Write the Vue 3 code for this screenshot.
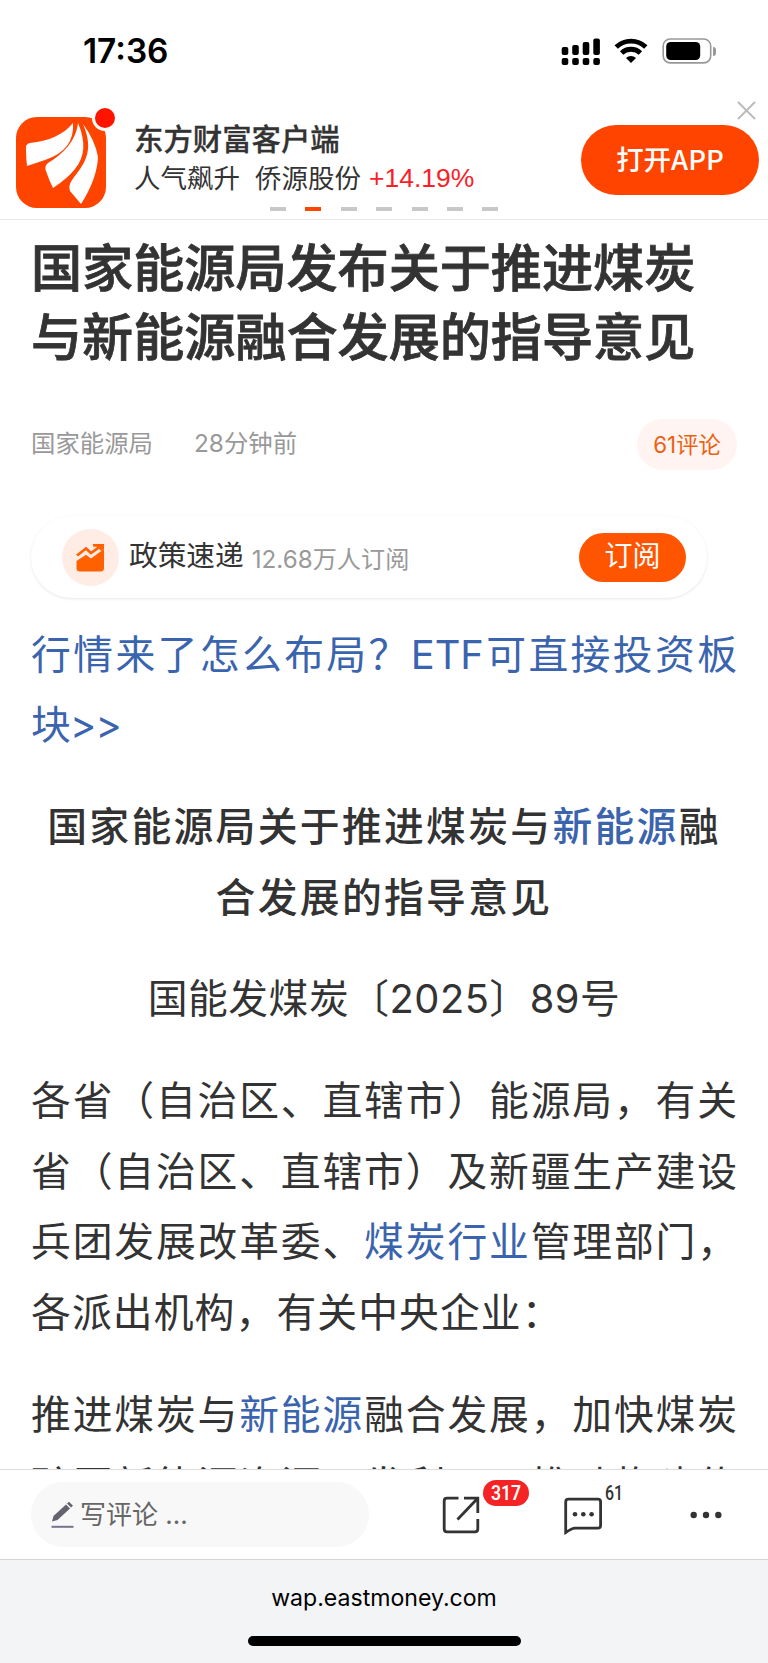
<template>
  <div class="page">
    <header class="status-bar">
      <span class="time">17:36</span>
      <svg class="status-icons" width="152" height="32" viewBox="0 0 152 32">
        <rect
          v-for="bar in signalBars"
          :key="`${bar.x}-${bar.y}`"
          :x="bar.x"
          :y="bar.y"
          width="6.6"
          :height="bar.height"
          rx="2"
        />
        <g fill="none" stroke="#000" stroke-width="4.8">
          <path d="M56.2 14a21.4 21.4 0 0 1 29.6 0" />
          <path d="M61.6 20a13.6 13.6 0 0 1 18.8 0" />
        </g>
        <path d="M71 30l-5-5.1a7.2 7.2 0 0 1 10 0z" />
        <rect x="103.2" y="6" width="47.5" height="23.9" rx="7" fill="none" stroke="#999" stroke-width="1.6" />
        <rect x="106.2" y="9" width="34" height="18" rx="4.5" />
      </svg>
      <i class="battery-cap"></i>
    </header>

    <section class="app-banner">
      <div class="logo">
        <svg width="90" height="91" viewBox="0 0 90 91">
          <path fill="#fff" d="M57 6C47 18 33 24 14 26Q9 27 10 33Q10 41 11 49L29 43Q59 33 57 6Z" />
          <path fill="#fff" d="M62 6C60 24 47 37 32 46Q28 49 30 54Q33 63 37 71Q52 61 59 52Q74 34 62 6Z" />
          <path fill="#fff" d="M67 7Q79 23 82 40Q81 62 65 87L54 74Q52 69 56 63C68 47 79 35 67 7Z" />
        </svg>
        <i class="logo-dot"></i>
      </div>
      <div class="banner-text">
        <div class="banner-title">东方财富客户端</div>
        <div class="banner-sub">
          <span>人气飙升</span>
          <span class="stock">侨源股份</span>
          <span class="rise">+14.19%</span>
        </div>
      </div>
      <button class="open-app">打开APP</button>
      <svg class="close" width="19" height="19" viewBox="0 0 19 19">
        <path d="M1 1L18 18M18 1L1 18" stroke="#bcbcbc" stroke-width="2" />
      </svg>
      <div class="pager">
        <i v-for="n in 7" :key="n" :class="{ active: n === 2 }"></i>
      </div>
    </section>

    <main class="article">
      <h1>国家能源局发布关于推进煤炭<br />与新能源融合发展的指导意见</h1>

      <div class="meta">
        <span>国家能源局</span>
        <span class="ago">28分钟前</span>
        <span class="comment-count">61评论</span>
      </div>

      <div class="subscribe">
        <svg class="topic-icon" width="57" height="57" viewBox="0 0 57 57">
          <circle cx="28.5" cy="28.5" r="28.5" fill="#ffece4" />
          <path d="M15 26.5L24 19.5L29 24L39 16.8" fill="none" stroke="#ff6000" stroke-width="2.7" />
          <path d="M31 15H42V20L39 22L36 18L31 17.5Z" fill="#ff6000" />
          <path d="M14.5 32L24 25.8L29 29.5L42 20V39Q42 42.5 38.5 42.5H18Q14.5 42.5 14.5 39Z" fill="#ff6000" />
        </svg>
        <span class="topic">政策速递</span>
        <span class="readers">12.68万人订阅</span>
        <button class="subscribe-btn">订阅</button>
      </div>

      <div class="content">
        <p v-for="(para, i) in paragraphs" :key="i" :class="para.type">
          <span
            v-for="(line, j) in para.lines"
            :key="j"
            class="line"
            :class="{ full: line.full }"
          ><template v-for="(part, k) in line.parts" :key="k"><a v-if="part.link">{{ part.text }}</a><template v-else>{{ part.text }}</template></template></span>
        </p>
      </div>
    </main>

    <nav class="toolbar">
      <div class="comment-input">
        <svg width="23" height="28" viewBox="0 0 23 28">
          <path d="M1 20.5L2.5 15L15 3.5L19 7.5L6.5 19Z" fill="#666370" />
          <path d="M16 2.5L18 .8L22 4.8L20 6.6Z" fill="#666370" />
          <path d="M.5 25.8H22.5" stroke="#77738a" stroke-width="2" />
        </svg>
        <span>写评论 ...</span>
      </div>
      <div class="tool share">
        <svg width="38" height="38" viewBox="0 0 38 38" fill="none" stroke="#333" stroke-width="2.8">
          <path d="M16.5 2.2H5Q2.2 2.2 2.2 5V33Q2.2 35.8 5 35.8H33Q35.8 35.8 35.8 33V23" />
          <path d="M22 2.2H35.8V17M35 3L15.5 23.5" />
        </svg>
        <span class="badge"><b>317</b></span>
      </div>
      <div class="tool chat">
        <svg width="38" height="38" viewBox="0 0 38 38" fill="none" stroke="#333" stroke-width="2.8">
          <path d="M1.7 35.5V5Q1.7 2.2 4.5 2.2H33.8Q36.6 2.2 36.6 5V28.5Q36.6 31.2 33.8 31.2H11Q8 31.4 1.7 35.5Z" />
          <g fill="#333" stroke="none">
            <circle cx="11" cy="17.2" r="2.3" />
            <circle cx="19.3" cy="17.2" r="2.3" />
            <circle cx="27.6" cy="17.2" r="2.3" />
          </g>
        </svg>
        <span class="chat-count">61</span>
      </div>
      <svg class="more" width="32" height="8" viewBox="0 0 32 8" fill="#333">
        <circle cx="3.7" cy="4" r="3.2" />
        <circle cx="16" cy="4" r="3.2" />
        <circle cx="28.3" cy="4" r="3.2" />
      </svg>
    </nav>

    <footer class="browser-bar">
      <span>wap.eastmoney.com</span>
      <i class="home-indicator"></i>
    </footer>
  </div>
</template>

<script setup>
const signalBars = [
  { x: 1.7, y: 14, height: 8 },
  { x: 12.2, y: 12, height: 10 },
  { x: 22.7, y: 9, height: 13 },
  { x: 33.3, y: 5.5, height: 16.5 },
  { x: 1.7, y: 25, height: 7 },
  { x: 12.2, y: 25, height: 7 },
  { x: 22.7, y: 25, height: 7 },
  { x: 33.3, y: 25, height: 7 },
]

// [text] marks a keyword link
const parse = (raw, full = false) => ({
  full,
  parts: raw
    .split(/(\[[^\]]+\])/)
    .filter(Boolean)
    .map((s) => (s[0] === '[' ? { text: s.slice(1, -1), link: true } : { text: s })),
})

const paragraphs = [
  {
    type: 'promo',
    lines: [parse('[行情来了怎么布局？ETF可直接投资板]', true), parse('[块>>]')],
  },
  {
    type: 'heading',
    lines: [parse('国家能源局关于推进煤炭与[新能源]融'), parse('合发展的指导意见')],
  },
  { type: 'doc-no', lines: [parse('国能发煤炭〔2025〕89号')] },
  {
    type: 'text',
    lines: [
      parse('各省（自治区、直辖市）能源局，有关', true),
      parse('省（自治区、直辖市）及新疆生产建设', true),
      parse('兵团发展改革委、[煤炭行业]管理部门，', true),
      parse('各派出机构，有关中央企业：'),
    ],
  },
  {
    type: 'text',
    lines: [
      parse('推进煤炭与[新能源]融合发展，加快煤炭', true),
      parse('矿区新能源资源开发利用，推动构建传', true),
    ],
  },
]
</script>

<style>
body {
  background: #fff;
}
</style>

<style scoped>
.page {
  display: flex;
  flex-direction: column;
  width: 768px;
  height: 1663px;
  overflow: hidden;
  background: #fff;
  color: #333;
  font-family: Inter, 'Noto Sans CJK SC', sans-serif;
  text-spacing-trim: space-all;
}

button {
  border: 0;
  padding: 0;
  color: #fff;
  font-family: inherit;
}

.status-bar {
  display: flex;
  align-items: flex-start;
  flex: none;
  box-sizing: border-box;
  height: 100px;
  padding: 32px 0 0 83px;
}

.status-icons {
  margin-top: 1px;
}

.time {
  width: 477px;
  font: 600 33.4px/38px Inter, sans-serif;
  color: #000;
}

.battery-cap {
  width: 3px;
  height: 9px;
  margin: 15px 0 0 1px;
  border-radius: 0 4px 4px 0;
  background: #999;
}

.app-banner {
  position: relative;
  display: flex;
  flex: none;
  box-sizing: border-box;
  height: 120px;
  padding: 17px 9px 0 16px;
  border-bottom: 1px solid #e8e8e8;
}

.logo {
  position: relative;
  width: 90px;
  height: 91px;
  border-radius: 21px;
  background: #ff4400;
}

.logo-dot {
  position: absolute;
  top: -12px;
  right: -12px;
  width: 20px;
  height: 20px;
  border: 3px solid #fff;
  border-radius: 50%;
  background: #ff1400;
}

.banner-text {
  flex: 1;
  margin-left: 28px;
}

.banner-title {
  margin-top: 4px;
  font-size: 29.4px;
  font-weight: 500;
  line-height: 38px;
  -webkit-text-stroke: 0.3px #333;
}

.banner-sub {
  display: flex;
  font-size: 26.5px;
  line-height: 38px;
  white-space: nowrap;
}

.stock {
  margin-left: 15px;
}

.rise {
  margin-left: 8px;
  font-family: 'Liberation Sans', sans-serif;
  font-size: 26.5px;
  color: #fa1e28;
}

.open-app {
  width: 178px;
  height: 70px;
  margin-top: 8px;
  border-radius: 35px;
  background: #ff4400;
  font-family: 'Noto Sans CJK SC', sans-serif;
  font-size: 27.5px;
  font-weight: 500;
  padding-bottom: 5px;
}

.close {
  position: absolute;
  top: 1px;
  right: 12px;
}

.pager {
  position: absolute;
  top: 107px;
  left: 270px;
  display: flex;
  gap: 19.4px;
}

.pager i {
  width: 16px;
  height: 4px;
  background: #c8c8c8;
}

.pager i.active {
  background: #ff4400;
}

.article {
  flex: 1;
  min-height: 0;
  padding: 0 31px;
  overflow: hidden;
}

h1 {
  margin: 14px 0 0;
  font-size: 51.1px;
  font-weight: 500;
  line-height: 69px;
  white-space: nowrap;
  -webkit-text-stroke: 0.8px #333;
}

.meta {
  display: flex;
  align-items: center;
  height: 51px;
  margin-top: 47px;
  font-size: 24.4px;
  line-height: 34px;
  color: #999;
}

.meta span {
  margin-top: -3px;
}

.meta .ago {
  margin-left: 41px;
}

.meta .comment-count {
  width: 100px;
  height: 51px;
  margin: 0 0 0 auto;
  border-radius: 26px;
  background: #fff4f1;
  color: #eb6110;
  font-size: 22.3px;
  line-height: 52px;
  text-align: center;
}

.subscribe {
  display: flex;
  align-items: center;
  box-sizing: border-box;
  width: 676px;
  height: 82px;
  margin-top: 46px;
  padding: 0 21px 0 31px;
  border-radius: 41px;
  box-shadow: 0 1px 3px rgba(0, 0, 0, 0.1);
}

.topic {
  margin: -7px 0 0 10px;
  font-size: 28.7px;
}

.readers {
  margin: 1px 0 0 8px;
  font-size: 24.2px;
  color: #999;
}

.subscribe-btn {
  width: 107px;
  height: 49px;
  margin-left: auto;
  padding-bottom: 7px;
  border-radius: 25px;
  background: #ff5500;
  font-size: 28px;
}

.content {
  margin-top: 21.5px;
  font-size: 39.8px;
  line-height: 70.8px;
}

.content p {
  margin: 0 0 30.8px;
}

.line {
  display: block;
  letter-spacing: 1.1px;
  white-space: nowrap;
}

.line.full {
  letter-spacing: 0;
  white-space: normal;
  text-align: justify;
  text-align-last: justify;
}

.content a {
  color: #3a64ae;
}

.promo .line:not(.full) {
  letter-spacing: -0.8px;
}

.content .heading {
  font-weight: 500;
  text-align: center;
}

.heading .line {
  letter-spacing: 2.3px;
}

.content .doc-no {
  text-align: center;
}

.doc-no .line {
  letter-spacing: 0.5px;
}

.toolbar {
  position: relative;
  display: flex;
  align-items: center;
  flex: none;
  box-sizing: border-box;
  height: 91px;
  padding: 0 34px 0 31px;
  border-top: 1px solid #dcdcdc;
  border-bottom: 1px solid #d4d4d6;
}

.comment-input {
  display: flex;
  align-items: center;
  box-sizing: border-box;
  width: 338px;
  height: 65px;
  padding-left: 20px;
  border-radius: 33px;
  background: #f8f8f8;
  color: #666;
  font-size: 26px;
  white-space: pre;
}

.comment-input span {
  margin: -4px 0 0 6px;
}

.tool {
  position: relative;
  height: 38px;
}

.share {
  margin-left: 73px;
}

.chat {
  margin: 3px 0 0 84px;
}

.badge {
  position: absolute;
  top: -16px;
  left: 41px;
  width: 46px;
  height: 26px;
  border-radius: 13px;
  background: #f52323;
  color: #fff;
  font: 20px/26px Roboto, sans-serif;
  text-align: center;
}

.badge b {
  display: block;
  font-weight: 600;
  transform: scaleX(0.88);
}

.chat-count {
  position: absolute;
  top: -17px;
  left: 41px;
  font: 500 21px/26px Roboto, sans-serif;
  transform: scaleX(0.76);
  transform-origin: left;
}

.more {
  margin-left: auto;
  margin-right: 12px;
}

.browser-bar {
  display: flex;
  flex-direction: column;
  align-items: center;
  flex: none;
  box-sizing: border-box;
  height: 103px;
  padding-top: 21px;
  background: #f3f4f6;
  color: #000;
  font: 23.1px/34px Inter, sans-serif;
}

.home-indicator {
  width: 273px;
  height: 10px;
  margin-top: 21px;
  border-radius: 5px;
  background: #000;
}
</style>
